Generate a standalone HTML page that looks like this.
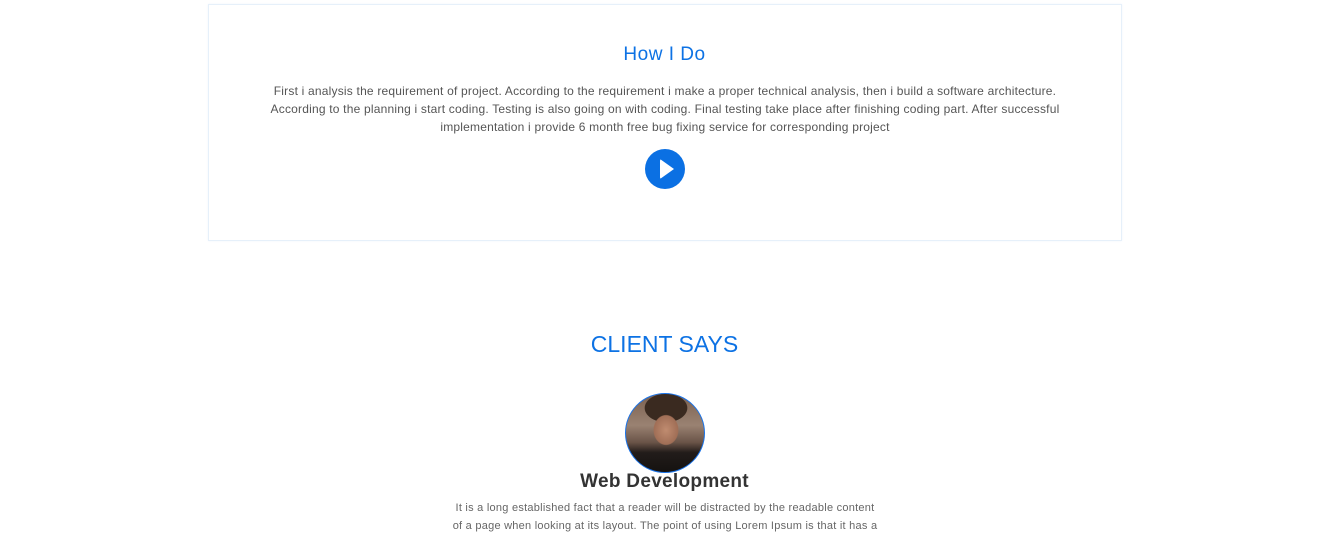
<!DOCTYPE html>
<html><head><meta charset="utf-8"><style>
body{margin:0;width:1329px;height:535px;overflow:hidden;background:#fff;font-family:"Liberation Sans",sans-serif;}
.card{position:absolute;left:208px;top:4px;width:912px;height:235px;border:1px solid #e6f0fa;box-shadow:0 0 2px #eef5fc;}
h2{position:absolute;left:0;width:100%;text-align:center;margin:0;color:#0d72e4;font-weight:normal;}
.p{position:absolute;text-align:center;color:#555;font-size:12px;line-height:18px;letter-spacing:0.2px;}
.play{position:absolute;left:645px;top:149px;width:40px;height:40px;border-radius:50%;background:#0b70e3;}
.play:after{content:"";position:absolute;left:15px;top:10px;border-left:14px solid #fff;border-top:10px solid transparent;border-bottom:10px solid transparent;border-radius:2px;}
.av{position:absolute;left:625px;top:393px;width:78px;height:78px;border-radius:50%;border:1px solid #1a73e8;overflow:hidden;background:radial-gradient(ellipse 20px 24px at 40px 36px,#c08c70 0%,#a06e56 60%,transparent 64%),radial-gradient(ellipse 30px 20px at 40px 14px,#3a2a20 0%,#3a2a20 70%,transparent 72%),linear-gradient(#7a6050 0%,#9a8272 40%,#6a5448 62%,#221c1a 75%,#151210 100%);}
</style></head><body>
<div class="card"></div>
<h2 style="top:44px;font-size:19px;letter-spacing:0.5px;">How I Do</h2>
<div class="p" style="left:210px;width:910px;top:82px;">First i analysis the requirement of project. According to the requirement i make a proper technical analysis, then i build a software architecture.<br>According to the planning i start coding. Testing is also going on with coding. Final testing take place after finishing coding part. After successful<br>implementation i provide 6 month free bug fixing service for corresponding project</div>
<div class="play"></div>
<h2 style="top:331px;font-size:23px;">CLIENT SAYS</h2>
<div class="av"></div>
<h2 style="top:471px;font-size:19px;color:#333;font-weight:bold;letter-spacing:0.3px;">Web Development</h2>
<div class="p" style="left:400px;width:530px;top:499px;font-size:11px;color:#666;letter-spacing:0.25px;">It is a long established fact that a reader will be distracted by the readable content<br>of a page when looking at its layout. The point of using Lorem Ipsum is that it has a</div>
</body></html>
